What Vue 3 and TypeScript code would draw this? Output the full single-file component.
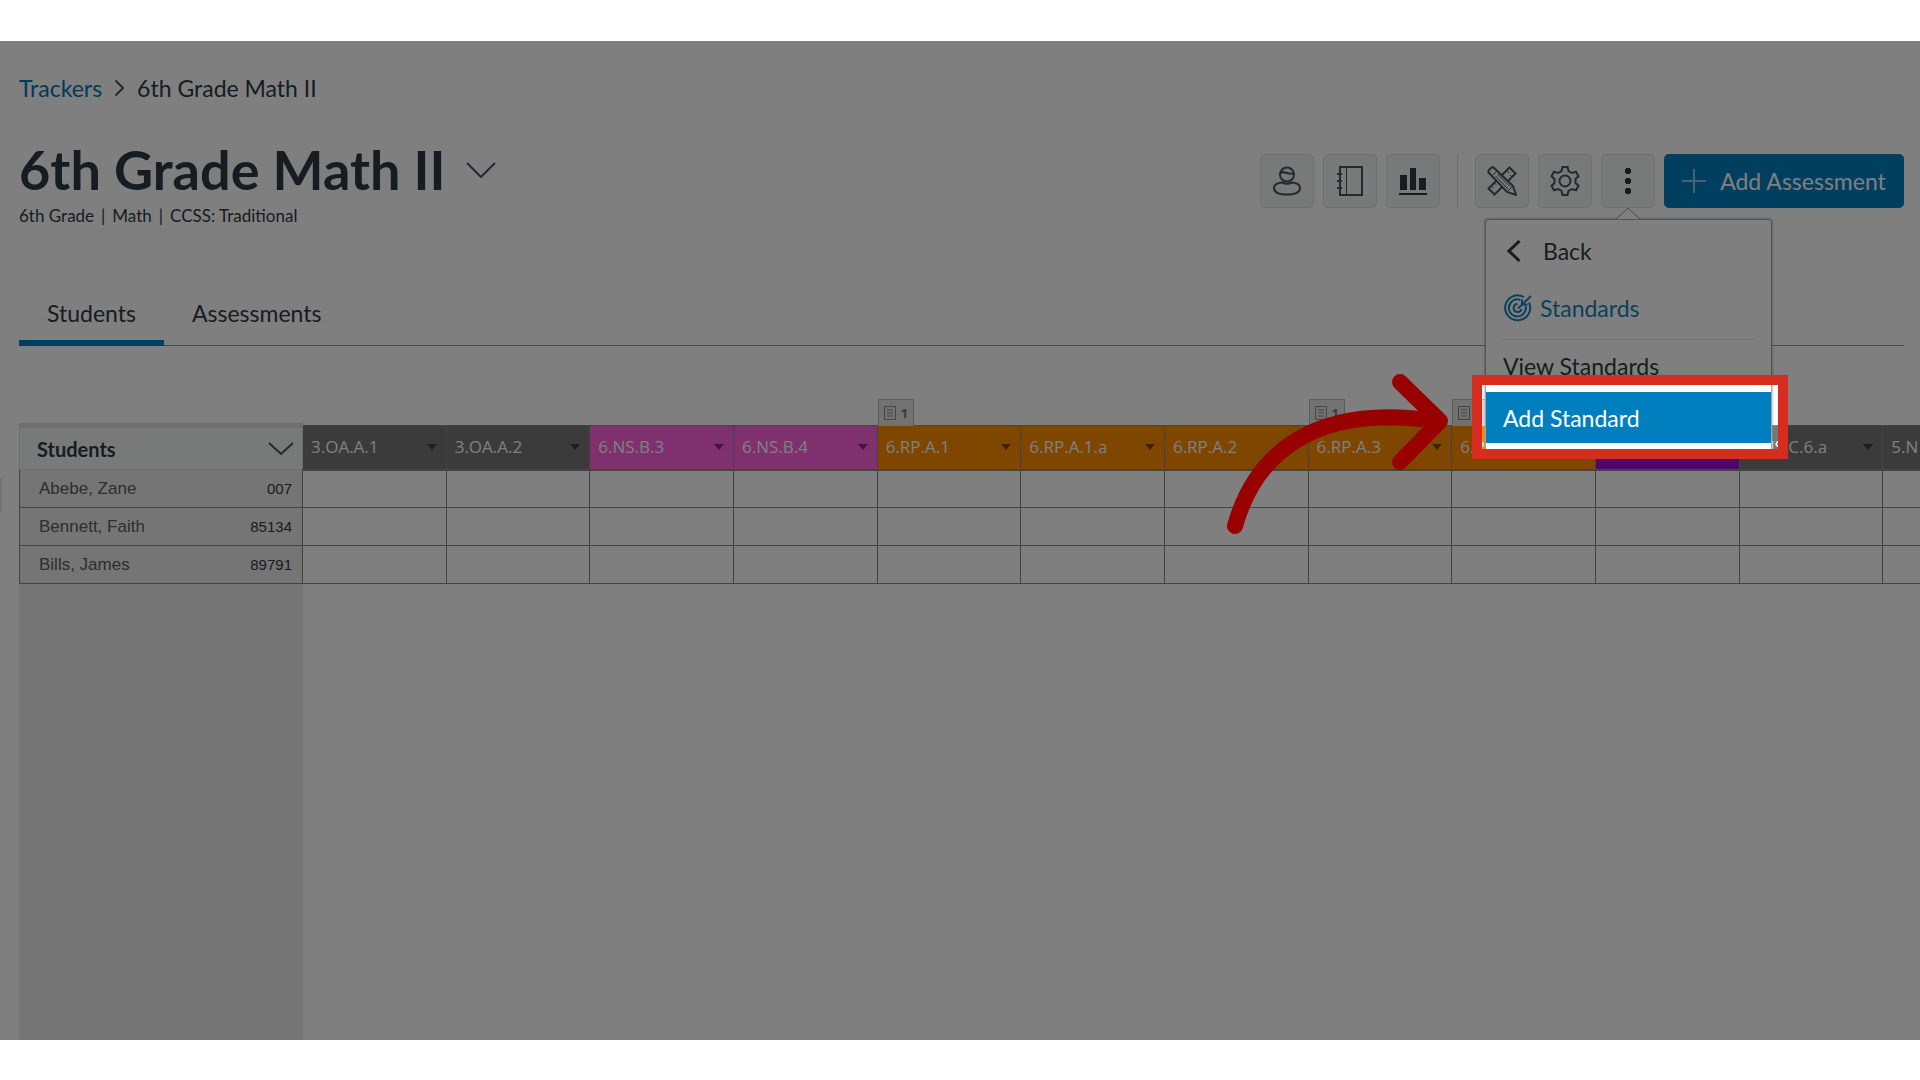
<script setup lang="ts">
interface Standard {
  code: string
  tone: 'plain' | 'pink' | 'orange' | 'purple'
  assessments?: number
}
interface Student {
  name: string
  id: string
}

const standards: Standard[] = [
  { code: '3.OA.A.1', tone: 'plain' },
  { code: '3.OA.A.2', tone: 'plain' },
  { code: '6.NS.B.3', tone: 'pink' },
  { code: '6.NS.B.4', tone: 'pink' },
  { code: '6.RP.A.1', tone: 'orange', assessments: 1 },
  { code: '6.RP.A.1.a', tone: 'orange' },
  { code: '6.RP.A.2', tone: 'orange' },
  { code: '6.RP.A.3', tone: 'orange', assessments: 1 },
  { code: '6.RP', tone: 'orange', assessments: 1 },
  { code: '', tone: 'purple' },
  { code: '6.NS.C.6.a', tone: 'plain' },
  { code: '5.N', tone: 'plain' },
]

const students: Student[] = [
  { name: 'Abebe, Zane', id: '007' },
  { name: 'Bennett, Faith', id: '85134' },
  { name: 'Bills, James', id: '89791' },
]
</script>

<template>
  <main class="stage">
    <span class="drawer-handle"></span>

    <nav class="crumbs" aria-label="Breadcrumb">
      <a href="#">Trackers</a>
      <svg width="11" height="18" viewBox="0 0 11 18"><path d="M1.500 1.500 9 9l-7.500 7.500" /></svg>
      <span>6th Grade Math II</span>
    </nav>

    <header class="head">
      <div>
        <div class="title-row">
          <h1>6th Grade Math II</h1>
          <button class="bare" aria-label="Switch tracker">
            <svg width="30" height="16" viewBox="0 0 30 16"><path d="M1 1l14 14L29 1" /></svg>
          </button>
        </div>
        <p class="meta"><span>6th Grade</span><span>|</span><span>Math</span><span>|</span><span>CCSS: Traditional</span></p>
      </div>

      <div class="toolbar">
        <button class="tool" aria-label="Students">
          <svg width="28" height="30" viewBox="0 0 28 30">
            <circle cx="14" cy="8.500" r="7" />
            <path d="M7 8c1-3 4-2 7-1s5 1 7 0" />
            <path d="M9 16.500c-5 .5-8 2.500-8 5.500 0 4 5 6.500 13 6.500s13-2.500 13-6.500c0-3-3-5-8-5.500-3 1.500-7 1.500-10 0z" />
          </svg>
        </button>
        <button class="tool" aria-label="Gradebook">
          <svg width="28" height="30" viewBox="0 0 28 30">
            <path d="M4 1h22v28H4z" /><path class="thin" d="M10.500 1v28" /><path d="M1 8h5M1 15h5M1 22h5" />
          </svg>
        </button>
        <button class="tool" aria-label="Reports">
          <svg width="30" height="28" viewBox="0 0 30 28">
            <path class="solid" d="M2 8h7v15H2zM12 1h6v22h-6zM21 11h7v12h-7zM1 26h28v2H1z" />
          </svg>
        </button>
        <span class="split"></span>
        <button class="tool" aria-label="Edit">
          <svg width="30" height="30" viewBox="0 0 30 30">
            <path d="M12 12 1.500 22.500l6 6L28.500 7.500l-6-6z" />
            <path class="thin" d="M4.500 20l2 2M7.500 17l2 2M20 5l2 2M23 9l2 2" />
            <path class="cover" d="M1.500 6.500Q1 5 2 4l2-2q1-1 2.500-.5L26 20l3 9-9-3z" />
            <path class="thin" d="M5 10l5-5M8.500 10 21 23M10.500 8 23 20.500M20 26l6-6M26 29l3-3" />
          </svg>
        </button>
        <button class="tool" aria-label="Settings">
          <svg width="30" height="30" viewBox="0 0 30 30">
            <circle cx="15" cy="15" r="5.500" />
            <path d="M12.500 1h5l1 4 3.500 2 4-1.200 2.500 4.400-3 2.800v4l3 2.800-2.500 4.400-4-1.200-3.500 2-1 4h-5l-1-4-3.500-2-4 1.200-2.500-4.400 3-2.800v-4l-3-2.800L4 5.800 8 7l3.500-2z" />
          </svg>
        </button>
        <div class="more">
          <button class="tool" aria-label="More options" aria-expanded="true">
            <svg width="6" height="26" viewBox="0 0 6 26">
              <path class="solid" d="M1 0h4v1h1v4H5v1H1V5H0V1h1zM1 10h4v1h1v4H5v1H1v-1H0v-4h1zM1 20h4v1h1v4H5v1H1v-1H0v-4h1z" />
            </svg>
          </button>
          <div class="menu">
            <svg class="nub" width="24" height="13" viewBox="0 0 24 13"><path d="M0 12 12 1l12 11" /></svg>
            <button class="item back">
              <svg width="14" height="22" viewBox="0 0 14 22"><path d="M12.500 1 2 11l10.500 10" /></svg>Back
            </button>
            <div class="item heading">
              <svg width="28" height="28" viewBox="0 0 28 28">
                <path d="M25 8.500A12.500 12.500 0 1 1 20 3M21.500 11.500a8.500 8.500 0 1 1-5-5.500M17.500 15a4 4 0 1 1-4-5" />
                <path d="M14 14.500 27 2M18 5.500v5h5.500" />
              </svg>Standards
            </div>
            <hr />
            <button class="item">View Standards</button>
            <div class="active-wrap">
              <button class="item active">Add Standard</button>
              <div class="spotlight"></div>
              <svg class="pointer" width="226" height="166" viewBox="0 0 226 166">
                <path d="M11 153C30 85 86 29 212 48M176 9l40 39-40 41" />
              </svg>
            </div>
          </div>
        </div>
        <button class="add">
          <svg width="24" height="24" viewBox="0 0 24 24"><path d="M12 0v24M0 12h24" /></svg>Add Assessment
        </button>
      </div>
    </header>

    <div class="tabs" role="tablist">
      <button role="tab" aria-selected="true" class="tab on">Students</button>
      <button role="tab" aria-selected="false" class="tab">Assessments</button>
    </div>

    <section class="grid">
      <table>
        <thead>
          <tr>
            <th class="who">
              <div class="who-in">
                Students
                <button class="bare" aria-label="Sort students">
                  <svg width="26" height="14" viewBox="0 0 26 14"><path d="M1 1l12 11L25 1" /></svg>
                </button>
              </div>
            </th>
            <th v-for="(s, i) in standards" :key="i" :class="s.tone">
              <span v-if="s.assessments" class="badge">
                <svg width="12" height="14" viewBox="0 0 12 14"><path d="M.5.5h11v13H.5zM3 4h6M3 7h6M3 10h6" /></svg>{{ s.assessments }}
              </span>
              <div class="std">
                {{ s.code }}
                <button class="bare" aria-label="Standard options"><i class="tri"></i></button>
              </div>
            </th>
          </tr>
        </thead>
        <tbody>
          <tr v-for="p in students" :key="p.id">
            <td class="student"><div class="student-in"><span>{{ p.name }}</span><small>{{ p.id }}</small></div></td>
            <td v-for="(s, i) in standards" :key="i"></td>
          </tr>
        </tbody>
      </table>
      <div class="gutter"></div>
    </section>
  </main>
</template>

<style>
body {
  margin: 0;
  background: #fff;
}
</style>

<style scoped>
* {
  box-sizing: border-box;
}
.stage {
  position: relative;
  display: flex;
  flex-direction: column;
  margin: 41px 0 40px;
  min-height: calc(100vh - 81px);
  padding: 33px 0 0 19px;
  overflow: hidden;
  background: #fff;
  color: #2d3b45;
  font: 23px/28px Lato, sans-serif;
}
button {
  padding: 0;
  border: 0;
  background: none;
  color: inherit;
  font: inherit;
}
svg {
  display: block;
  flex: none;
  fill: none;
  stroke: #46535d;
  stroke-width: 2;
}
.thin {
  stroke-width: 1;
}
.solid {
  fill: #2d3b45;
  stroke: none;
}
.bare {
  display: flex;
}
.drawer-handle {
  position: absolute;
  left: 0;
  top: 437px;
  width: 2px;
  height: 34px;
  background: #e8e8e8;
}
.crumbs {
  display: flex;
  align-items: center;
  gap: 12px;
}
.crumbs a {
  color: #0374b5;
  text-decoration: none;
}
.head {
  display: flex;
  justify-content: space-between;
  align-items: flex-start;
  margin: 36px 16px 0 0;
}
.title-row {
  display: flex;
  align-items: center;
  gap: 20px;
}
h1 {
  margin: 0;
  font-size: 54px;
  line-height: 64px;
  font-weight: 700;
}
.meta {
  display: flex;
  gap: 7px;
  margin: 4px 0 0;
  font-size: 17px;
  line-height: 20px;
}
.toolbar {
  display: flex;
  gap: 9px;
  margin-top: 16px;
}
.tool {
  display: flex;
  align-items: center;
  justify-content: center;
  width: 54px;
  height: 54px;
  border: 1px solid #dde1e1;
  border-radius: 5px;
  background: #f0f3f2;
}
.cover {
  fill: #f0f3f2;
}
.split {
  width: 1px;
  margin: 0 8px;
  background: #d8dadb;
}
.add {
  display: flex;
  align-items: center;
  justify-content: center;
  gap: 14px;
  width: 240px;
  height: 54px;
  border-radius: 5px;
  background: #007fbf;
  color: #fff;
}
.add svg {
  stroke: #8ec4e0;
}
.more {
  position: relative;
}
.menu {
  position: absolute;
  z-index: 5;
  top: 65px;
  left: -116px;
  width: 287px;
  padding-top: 17px;
  padding-bottom: 10px;
  border: 1px solid #a2a7b0;
  border-radius: 3px;
  background: #fff;
  box-shadow: 0 0 3px #8b929a;
}
.nub {
  position: absolute;
  top: -13px;
  left: 130px;
  fill: #fff;
  stroke: #8b929a;
  stroke-width: 1;
}
.item {
  display: flex;
  align-items: center;
  width: 100%;
  padding-left: 17px;
  text-align: left;
}
.back {
  gap: 22px;
  padding-left: 21px;
}
.back svg {
  stroke: #2d3b45;
  stroke-width: 3;
}
.heading {
  gap: 8px;
  margin-top: 29px;
  padding-left: 18px;
  color: #1283b8;
}
.heading svg {
  stroke: #1283b8;
}
hr {
  height: 1px;
  margin: 17px 17px 12px;
  border: 0;
  background: #e4e6e7;
}
.active-wrap {
  position: relative;
  margin-top: 12px;
}
.active {
  height: 51px;
  background: #007fbf;
  color: #fff;
}
.spotlight {
  position: absolute;
  top: -7px;
  left: -4px;
  width: 296px;
  height: 64px;
  box-shadow: 0 0 0 10px #d62d20, 0 0 0 3000px rgba(0, 0, 0, 0.5);
}
.pointer {
  position: absolute;
  top: -19px;
  right: 321px;
  stroke: #900;
  stroke-width: 16;
  stroke-linecap: round;
  stroke-linejoin: round;
}
.tabs {
  display: flex;
  margin: 73px 16px 0 0;
  box-shadow: inset 0 -1px #8b959e;
}
.tab {
  padding: 0 28px 13px;
  border-bottom: 6px solid transparent;
}
.on {
  border-color: #007fbf;
}
.grid {
  display: flex;
  flex: 1;
  flex-direction: column;
  margin-top: 77px;
}
table {
  width: 2008px;
  table-layout: fixed;
  border-collapse: collapse;
}
th {
  position: relative;
  height: 44px;
  padding: 0;
  border: 1px solid #888;
  border-bottom-width: 2px;
  background: #777;
  color: #fff;
  font: 17px/24px "Open Sans", sans-serif;
  text-align: left;
}
.who {
  width: 283px;
  border: 1px solid #dde1e1;
  border-top: 5px solid #dde1e1;
  background: #f0f3f2;
  color: #2d3b45;
  font: 700 20px/24px Lato, sans-serif;
}
.who-in,
.std,
.student-in {
  display: flex;
  align-items: center;
  justify-content: space-between;
}
.who-in {
  padding: 0 8px 0 17px;
}
.std {
  padding: 0 9px 0 8px;
}
.pink {
  background: #ff60dc;
}
.orange {
  background: #ff8c00;
}
.purple {
  background: #9c0dd4;
}
.tri {
  border: 5px solid transparent;
  border-top: 6px solid rgba(0, 0, 0, 0.5);
  border-bottom: 0;
}
.badge {
  position: absolute;
  bottom: 100%;
  left: 0;
  display: flex;
  align-items: center;
  gap: 5px;
  height: 27px;
  padding: 0 5px;
  border: 1px solid #bbb;
  border-bottom: 0;
  background: #e4e4e4;
  color: #777;
  font: 700 13px/20px "Open Sans", sans-serif;
}
.badge svg {
  stroke: #888;
  stroke-width: 1;
}
td {
  height: 38px;
  padding: 0;
  border: 1px solid #888;
}
.student {
  background: #eaeaea;
  color: #5c5c5c;
  font: 17px/24px "Liberation Sans", Arial, sans-serif;
}
.student-in {
  padding: 0 10px 0 19px;
}
small {
  color: #2d3b45;
  font-size: 15px;
}
.gutter {
  flex: 1;
  width: 284px;
  background: #eaeaea;
}
</style>
